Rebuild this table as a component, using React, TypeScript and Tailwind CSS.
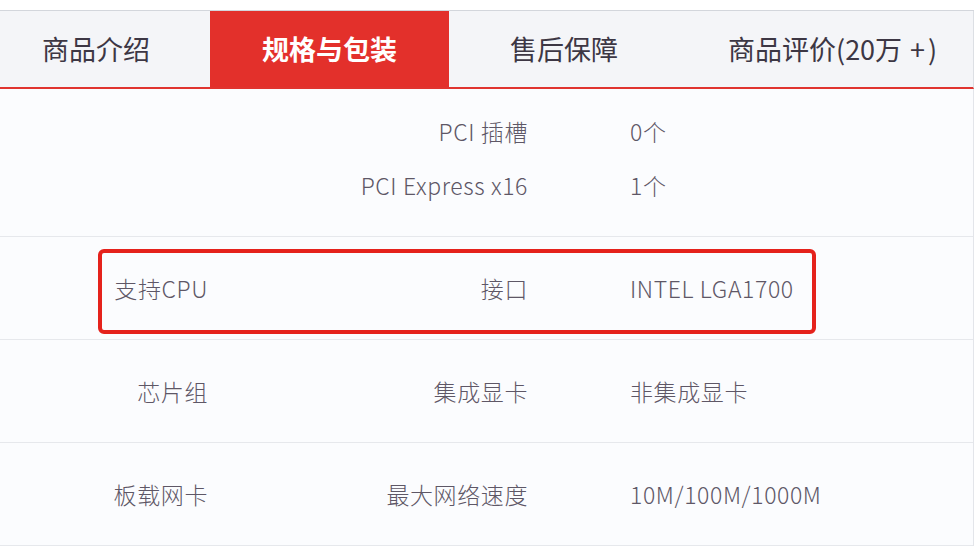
const FONT = { fontFamily: '"Noto Sans CJK SC", "Noto Sans", sans-serif' };

type Row = { group?: string; items: [string, string][] };

const ROWS: Row[] = [
  { group: "支持CPU", items: [["接口", "INTEL LGA1700"]] },
  { group: "芯片组", items: [["集成显卡", "非集成显卡"]] },
  { group: "板载网卡", items: [["最大网络速度", "10M/100M/1000M"]] },
];

export default function App() {
  return (
    <div className="h-[548px] w-[974px] overflow-hidden bg-white" style={FONT}>
      {/* top strip */}
      <div className="h-[11px] border-b border-[#d3d6dc] bg-white" />

      {/* tabs */}
      <div className="flex h-[78px] border-r border-[#dcdfe4] border-b-2 border-b-[#e0342f] bg-[#f4f5f8] text-[27px] text-[#3d3744]">
        <div className="flex w-[210px] items-center pl-[42px]">商品介绍</div>
        <div className="flex w-[239px] items-center justify-center bg-[#e3302b] font-bold text-white">规格与包装</div>
        <div className="flex w-[279px] items-center pl-[61px]">售后保障</div>
        <div className="flex flex-1 items-center">
          商品评价(20万<span className="mr-[3px] ml-[8px]">+</span>)
        </div>
      </div>

      {/* spec table */}
      <div className="border-r border-[#e3e5ea] bg-[#fbfcfe] text-[23px] font-light tracking-[0.6px] text-[#5e5766]">
        <div className="border-b border-[#e6e8ec] pt-[15px] pb-[24px]">
          {[
            ["PCI 插槽", "0个"],
            ["PCI Express x16", "1个"],
          ].map(([k, v]) => (
            <div key={k} className="flex h-[54px] items-center">
              <div className="w-[208px]" />
              <div className="w-[320px] text-right">{k}</div>
              <div className="pl-[102px]">{v}</div>
            </div>
          ))}
        </div>

        {ROWS.map((row, i) => (
          <div key={row.group} className="relative flex h-[103px] items-center border-b border-[#e6e8ec]">
            <div className="w-[208px] text-right">{row.group}</div>
            <div className="w-[320px] text-right">{row.items[0][0]}</div>
            <div className="pl-[102px]">{row.items[0][1]}</div>
            {i === 0 && (
              <div className="absolute top-[12px] left-[98px] h-[85px] w-[718px] rounded-md border-4 border-[#e5221c]" />
            )}
          </div>
        ))}
      </div>
    </div>
  );
}
